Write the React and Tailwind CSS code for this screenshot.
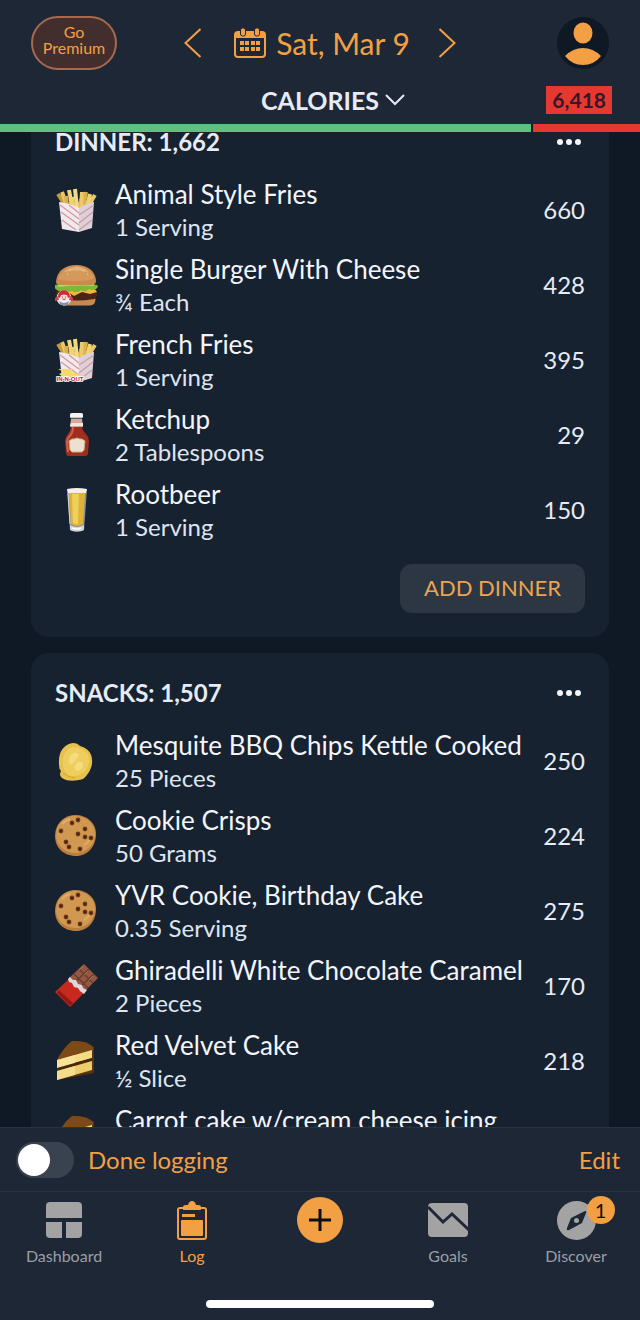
import { useState } from 'react'

const ORANGE = '#f2a043'

const dinner = [
  { name: 'Animal Style Fries', amount: '1 Serving', calories: 660, icon: 'fries' },
  { name: 'Single Burger With Cheese', amount: '¾ Each', calories: 428, icon: 'burger' },
  { name: 'French Fries', amount: '1 Serving', calories: 395, icon: 'friesBrand' },
  { name: 'Ketchup', amount: '2 Tablespoons', calories: 29, icon: 'ketchup' },
  { name: 'Rootbeer', amount: '1 Serving', calories: 150, icon: 'beer' },
]

const snacks = [
  { name: 'Mesquite BBQ Chips Kettle Cooked', amount: '25 Pieces', calories: 250, icon: 'chip' },
  { name: 'Cookie Crisps', amount: '50 Grams', calories: 224, icon: 'cookie' },
  { name: 'YVR Cookie, Birthday Cake', amount: '0.35 Serving', calories: 275, icon: 'cookie' },
  { name: 'Ghiradelli White Chocolate Caramel', amount: '2 Pieces', calories: 170, icon: 'chocolate' },
  { name: 'Red Velvet Cake', amount: '½ Slice', calories: 218, icon: 'cake' },
  { name: 'Carrot cake w/cream cheese icing', calories: 370, icon: 'cake' },
]

function Fries() {
  return (
    <>
      <g strokeLinecap="butt" strokeWidth="4">
        <path d="M10 17 3 6M38 17 24 12" stroke="#c99a3c" />
        <path d="M12 18 7 4M33 18 40 7" stroke="#e9c766" />
        <path d="M14 14h20v6H14z" fill="#d2a243" stroke="none" />
        <path d="M17 18 14 2" stroke="#f1d67c" />
        <path d="M12 18 11 8M28 20 31 4" stroke="#dcb14c" />
        <path d="M22 20 20 1" stroke="#f3d983" />
        <path d="M26 22 27 4M35 16 38 9" stroke="#ecca68" />
        <path d="M18 20 17 9M32 19 35 6" stroke="#f0d272" />
      </g>
      <path d="M4 14q10 1 20 6v24L7 41Z" fill="#f1e9ec" />
      <path d="M39 14q-8 1-15 6v24l13-4Z" fill="#ddd0d6" />
      <path
        d="m5 17 19 14M6 24l18 13M7 32l14 10M14 17l10 8M39 17 24 27M38 24 24 35M37 32l-13 10"
        stroke="#cf9aa5"
        strokeWidth="1.300"
        fill="none"
      />
    </>
  )
}

function FriesBrand() {
  return (
    <>
      <Fries />
      <path d="M3 31h15l-2 3 8 2-6 6-2-3H8l-4-3 5-2Z" fill="#f5da63" />
      <text
        x="15"
        y="43"
        textAnchor="middle"
        fontFamily="Liberation Sans, sans-serif"
        fontWeight="700"
        fontSize="6"
        fill="#c0203a"
        stroke="#fff"
        strokeWidth="1.600"
        paintOrder="stroke"
      >
        IN-N-OUT
      </text>
    </>
  )
}

function Burger() {
  return (
    <>
      <path d="M2 33q20-5 38 0 2 9-5 9.500H9Q2 42 2 33Z" fill="#c68a50" />
      <path d="M1 28q20-5 41 0 1 7-3 8-17 3-34 0-5-2-4-8Z" fill="#4a2517" />
      <path d="M5 25h34l3 4-7 2-8-2-8 4-6-4-8 1Z" fill="#f3b53a" />
      <path d="M0 22q20-6 42 0 2 2-1 4-4 2-7 0-4 4-8 1-4 4-9 1-4 2-8-1-3 3-7 0-3-1-2-5Z" fill="#7db83a" />
      <path d="M3 23q17-2 36-1" stroke="#b4dc62" strokeWidth="1.500" fill="none" />
      <path d="M1 19C2 7 11 2 21 2s20 5 20 17q-1 3-5 3H6q-5 0-5-3Z" fill="#c98a4c" />
      <path d="M3 16C6 7 14 3 21 3s15 4 18 12q-3 3-18 3T3 16Z" fill="#d49a5c" />
      <path d="M9 9q5-4 12-5 8 0 12 5-12-3-24 0Z" fill="#e2b278" />
      <path d="M14 7h1M22 5h1M28 8h1M32 11h1M12 11h1" stroke="#f0d3a4" strokeWidth="1" />
      <circle cx="9" cy="35" r="7.500" fill="#f2eef0" />
      <path d="M3 34c0-9 12-9 12 0l-2 1-1-3H6l-1 3Z" fill="#cf2a36" />
      <path d="m0 35 3-2 1 4-4 1ZM18 35l-3-2-1 4 4 1Z" fill="#d5404c" />
      <circle cx="9" cy="34.500" r="3" fill="#f7d9cd" />
      <path d="M7 34h1M10 34h1M7.500 36q1.500 1 3 0" stroke="#8d2430" strokeWidth=".8" fill="none" />
      <path d="M4 38q5 4 10 0l-1 4H5Z" fill="#7d91b8" />
    </>
  )
}

function Ketchup() {
  return (
    <>
      <path d="M16 12h11q0 6 4 9 3 3 3 7l-1 12q0 3-3 3H14q-3 0-3-3l-1-12q0-4 3-7 3-3 3-9Z" fill="#a02e1c" />
      <path d="M18 14q0 6-4 10-2 2-2 6l1 9" stroke="#d2604a" strokeWidth="2" fill="none" />
      <path d="M16 6h11l1 8H15Z" fill="#dba69a" />
      <path d="M16 10h12v3H15Z" fill="#eee4e2" />
      <rect x="15" y="0" width="13" height="5" rx="1.500" fill="#f3f3f6" />
      <path d="M16 5h11" stroke="#8e9cb0" strokeWidth="1" />
      <path d="m14 28 3-2h2l3-1 3 1h2l3 2-1 9-2 2H17l-2-2Z" fill="#ece0cf" stroke="#c7ae92" />
    </>
  )
}

function Beer() {
  return (
    <>
      <path d="M12 1h20l-3 41q-7 3-14 0Z" fill="#8b9198" />
      <path d="M14 5h16l-2 31q-6 4-12 0Z" fill="#dfb237" />
      <path d="M17 6h7l-1 30q-3 1-5-1Z" fill="#efd05c" />
      <path d="m13 5 2 31" stroke="#d8d9d2" strokeWidth="1" />
      <path d="M12 1q10-2 20 0l-1 4H13Z" fill="#f2efe6" />
      <path d="M15 37q7 4 14 0v5q-7 3-14 0Z" fill="#cfd6dd" />
      <path d="M17 40q5 2 9 0" stroke="#fff" strokeWidth="1.500" fill="none" />
    </>
  )
}

function Chip() {
  return (
    <>
      <path d="M4 26C3 11 10 7 14 5q7-3 11 2c9 3 13 8 12 18-1 5-4 11-9 15-7 2-15 3-21-1-3-3-2-5-1-7q-2-2-2-6Z" fill="#e8c04c" />
      <path d="M8 23c0-9 5-15 13-15 9 2 14 8 13 15-1 8-6 13-14 14-9 1-12-6-12-14Z" fill="#efce60" />
      <path d="M16 16q5-5 8 0-4 6-8 10-4-4 0-10ZM22 24q5-3 6 1 0 6-6 7-5-3 0-8Z" fill="#f8e38c" opacity=".7" />
      <path d="M8 34q4 4 12 5" stroke="#d3a436" strokeWidth="1" fill="none" />
    </>
  )
}

const cookieChips = [[17, 9], [23, 6], [6, 17], [30, 15], [23, 20], [30, 23], [36, 24], [11, 28], [14, 33], [25, 35]]

function Cookie() {
  return (
    <>
      <path d="M20 1c12 0 21 8 21 19 0 12-8 22-20 22C8 42 0 33 0 22 0 10 9 1 20 1Z" fill="#b97e3b" />
      <path d="M20 2c11 0 20 7 20 18 0 10-8 19-19 19S1 32 1 21 9 2 20 2Z" fill="#d09850" />
      <path d="M7 10q4-4 8-5M29 31q5-3 7-8" stroke="#dfae68" strokeWidth="2" fill="none" />
      {cookieChips.map(([x, y]) => (
        <g key={`${x}-${y}`}>
          <circle cx={x} cy={y} r="2.400" fill="#6f3c1b" />
          <circle cx={x} cy={y} r="1" fill="#3b1a0c" />
        </g>
      ))}
    </>
  )
}

function Chocolate() {
  return (
    <>
      <path d="M29 0 43 14 28 29 14 14Z" fill="#945742" />
      <path d="m24 5 14 14M19 10l14 14M34 5 19 19M39 10 24 24" stroke="#683828" strokeWidth="1.200" />
      <path d="m28 2-4 4M33 7l-4 4M38 12l-4 4" stroke="#b0745c" strokeWidth="1" />
      <path d="M14 15 0 28l15 15 15-15Z" fill="#c8291f" />
      <path d="M2 29 15 42l3-3L4 26Z" fill="#98180f" />
      <path d="m13 15 2-2 3 3h3l2 4 4 1 1 3 4 2-3 4-4-3-2-3-4-1-2-4-3-1Z" fill="#ddd9da" />
    </>
  )
}

function Cake() {
  return (
    <>
      <path d="M2 21Q9 8 17 2q14-1 22 6v26L2 41Z" fill="#5a320f" />
      <path d="M2 21Q9 8 17 2q14-1 21 6v3Z" fill="#7d4a17" />
      <path d="M2 21 37 11v8L2 29Z" fill="#f4dc86" />
      <path d="M2 29 37 19v3L2 32Z" fill="#4a260b" />
      <path d="M2 32 37 22v9L2 41Z" fill="#eccd69" />
      <path d="M2 21 20 16v8L2 29ZM2 32l18-5v9L2 41Z" fill="#faeaa6" opacity=".6" />
    </>
  )
}

const foodIcons = {
  fries: Fries,
  friesBrand: FriesBrand,
  burger: Burger,
  ketchup: Ketchup,
  beer: Beer,
  chip: Chip,
  cookie: Cookie,
  chocolate: Chocolate,
  cake: Cake,
}

function Chevron({ d }) {
  return (
    <svg viewBox="0 0 18 30" className="h-[30px] w-[18px]" fill="none" stroke={ORANGE} strokeWidth="2">
      <path d={d} />
    </svg>
  )
}

function CalendarIcon() {
  return (
    <svg viewBox="0 0 32 30" className="h-[30px] w-8" fill={ORANGE}>
      <path d="M4 3h24q4 0 4 4v19q0 4-4 4H4q-4 0-4-4V7q0-4 4-4Zm-2 7v16q0 2 2 2h24q2 0 2-2V10Z" fillRule="evenodd" />
      <rect x="6.500" y="0" width="5" height="8" rx="2" stroke="#1d2736" />
      <rect x="20.500" y="0" width="5" height="8" rx="2" stroke="#1d2736" />
      {[6, 11, 17, 22].map((x) => (
        <g key={x}>
          <rect x={x} y="13" width="4" height="4" />
          <rect x={x} y="19" width="4" height="4" />
        </g>
      ))}
    </svg>
  )
}

function Header() {
  return (
    <header className="shrink-0 bg-[#1d2736]">
      <div className="grid grid-cols-[1fr_auto_1fr] items-center px-[31px] pt-4">
        <button className="h-[54px] w-[86px] justify-self-start rounded-full border-2 border-[#a86a4e] bg-[#422e2d] pb-[6px] text-base leading-4 text-[#f2a043]">
          Go
          <br />
          Premium
        </button>
        <div className="flex items-center">
          <button aria-label="Previous day">
            <Chevron d="M16.500 1 1.500 15l15 14" />
          </button>
          <button className="mr-7 ml-8 flex items-center gap-[10px] text-3xl leading-8 whitespace-nowrap text-[#f2a043]">
            <CalendarIcon />
            Sat, Mar 9
          </button>
          <button aria-label="Next day">
            <Chevron d="m1.500 1 15 14-15 14" />
          </button>
        </div>
        <button aria-label="Profile" className="justify-self-end">
          <svg viewBox="0 0 52 52" className="size-[52px]">
            <circle cx="26" cy="26" r="26" fill="#0f1926" />
            <ellipse cx="26" cy="16" rx="9.500" ry="10.500" fill={ORANGE} />
            <path d="M8 39q8-8 18-8t18 8q-7 9-18 9T8 39Z" fill={ORANGE} />
          </svg>
        </button>
      </div>
      <div className="mt-4 grid grid-cols-[1fr_auto_1fr] items-center pr-7 pb-[10px]">
        <button className="col-start-2 flex items-center gap-[6px] pl-[54px] text-[25px] leading-7 font-bold text-[#e6ebf5]">
          CALORIES
          <svg viewBox="0 0 20 12" className="h-3 w-5" fill="none" stroke="#e6ebf5" strokeWidth="2">
            <path d="m1 1 9 9 9-9" />
          </svg>
        </button>
        <span className="justify-self-end bg-[#e53830] px-[6px] text-[21px] leading-7 font-bold text-[#34182a]">
          6,418
        </span>
      </div>
      <div className="flex h-2 gap-[2px] bg-[#101a27]">
        <div className="w-[83%] bg-[#5fc080]" />
        <div className="flex-1 bg-[#e53830]" />
      </div>
    </header>
  )
}

function FoodRow({ item }) {
  const Icon = foodIcons[item.icon]
  return (
    <li className="flex h-[75px] items-center gap-4">
      <svg viewBox="0 0 44 44" className="size-11 shrink-0" fill="none">
        <Icon />
      </svg>
      <div className="min-w-0 flex-1 whitespace-nowrap">
        <p className="text-[26px] leading-[34px] text-[#f3f5fb]">{item.name}</p>
        <p className="min-h-8 text-2xl leading-8 text-[#dfe5f0]">{item.amount}</p>
      </div>
      <span className="text-2xl text-[#e6ebf5]">{item.calories}</span>
    </li>
  )
}

function MealCard({ title, items, action }) {
  return (
    <section className="rounded-[18px] bg-[#172230] px-6 pt-5 pb-6">
      <div className="mb-[10px] flex h-10 items-center justify-between">
        <h2 className="text-2xl font-bold text-[#e6ebf5]">{title}</h2>
        <button aria-label={`${title} options`} className="pr-1">
          <svg viewBox="0 0 24 8" className="h-2 w-6" fill="#f3f5fb">
            <circle cx="3" cy="4" r="3" />
            <circle cx="12" cy="4" r="3" />
            <circle cx="21" cy="4" r="3" />
          </svg>
        </button>
      </div>
      <ul>
        {items.map((item) => (
          <FoodRow key={item.name} item={item} />
        ))}
      </ul>
      {action && (
        <div className="mt-[17px] flex justify-end">
          <button className="h-[49px] rounded-xl bg-[#2d3643] px-6 pb-[2px] text-[22px] text-[#e9a552]">{action}</button>
        </div>
      )}
    </section>
  )
}

function NavItem({ label, active, children }) {
  return (
    <a
      href="#"
      className={`flex flex-col items-center gap-1 text-base leading-6 ${active ? 'text-[#f2a043]' : 'text-[#9b9fa6]'}`}
    >
      <span className="relative flex h-10 items-center">{children}</span>
      {label}
    </a>
  )
}

function Footer() {
  const [done, setDone] = useState(false)

  return (
    <footer className="shrink-0 border-t border-[#293442] bg-[#1d2736]">
      <div className="flex h-[63px] items-center justify-between pr-5 pl-4 text-2xl text-[#f2a043]">
        <label className="flex items-center gap-[14px]">
          <input
            type="checkbox"
            checked={done}
            onChange={(e) => setDone(e.target.checked)}
            className="h-9 w-[58px] appearance-none rounded-full bg-[#39424f] p-[2px] before:block before:size-8 before:rounded-full before:bg-white checked:bg-[#5fc080] checked:before:ml-auto"
          />
          Done logging
        </label>
        <button>Edit</button>
      </div>
      <nav className="grid grid-cols-5 border-t border-[#293442] pt-2">
        <NavItem label="Dashboard">
          <svg viewBox="0 0 36 36" className="size-9" fill="#a3a3a3">
            <path d="M4 0h28q4 0 4 4v12H0V4q0-4 4-4ZM0 20h16v16H4q-4 0-4-4ZM20 20h16v12q0 4-4 4H20Z" />
          </svg>
        </NavItem>
        <NavItem label="Log" active>
          <svg viewBox="0 0 30 39" className="h-[39px] w-[30px]" fill={ORANGE}>
            <rect x="1" y="7" width="28" height="31" rx="2" fill="none" stroke={ORANGE} strokeWidth="2" />
            <path d="M6 9V6q0-2 3-2h2q1-4 4-4t4 4h2q3 0 3 2v3Z" />
            <rect x="5" y="13" width="13" height="3" />
            <rect x="4" y="19" width="22" height="16" rx="1" />
          </svg>
        </NavItem>
        <button aria-label="Add food" className="flex h-10 items-center justify-self-center">
          <svg viewBox="0 0 46 46" className="size-[46px]">
            <circle cx="23" cy="23" r="23" fill={ORANGE} />
            <path d="M23 12v22M12 23h22" stroke="#0c0f14" strokeWidth="3" />
          </svg>
        </button>
        <NavItem label="Goals">
          <svg viewBox="0 0 40 34" className="h-[34px] w-10" fill="#a3a3a3">
            <rect width="40" height="34" rx="4" />
            <path d="m0 4 15 15 9-8 17 16" fill="none" stroke="#1d2736" strokeWidth="3" />
          </svg>
        </NavItem>
        <NavItem label="Discover">
          <svg viewBox="0 0 39 39" className="size-[39px]">
            <circle cx="19.500" cy="19.500" r="19.500" fill="#a3a3a3" />
            <path d="M28 10q2 0 1 2l-4 10-13 7q-3 1-2-2l4-10Z" fill="#1d2736" />
            <circle cx="19.500" cy="19.500" r="2.500" fill="#a3a3a3" />
          </svg>
          <span className="absolute -top-1 left-[30px] size-7 rounded-full bg-[#f2a043] text-center text-xl leading-7 text-[#0c0f14]">
            1
          </span>
        </NavItem>
      </nav>
      <div className="mx-auto mt-8 mb-3 h-2 w-[228px] rounded-full bg-white" />
    </footer>
  )
}

export default function App() {
  return (
    <div className="flex h-screen flex-col overflow-hidden bg-[#0f1926] font-['Lato',sans-serif]">
      <Header />
      <main className="min-h-0 flex-1 overflow-hidden px-[31px]">
        <div className="-mt-[30px] space-y-4">
          <MealCard title="DINNER: 1,662" items={dinner} action="ADD DINNER" />
          <MealCard title="SNACKS: 1,507" items={snacks} />
        </div>
      </main>
      <Footer />
    </div>
  )
}
